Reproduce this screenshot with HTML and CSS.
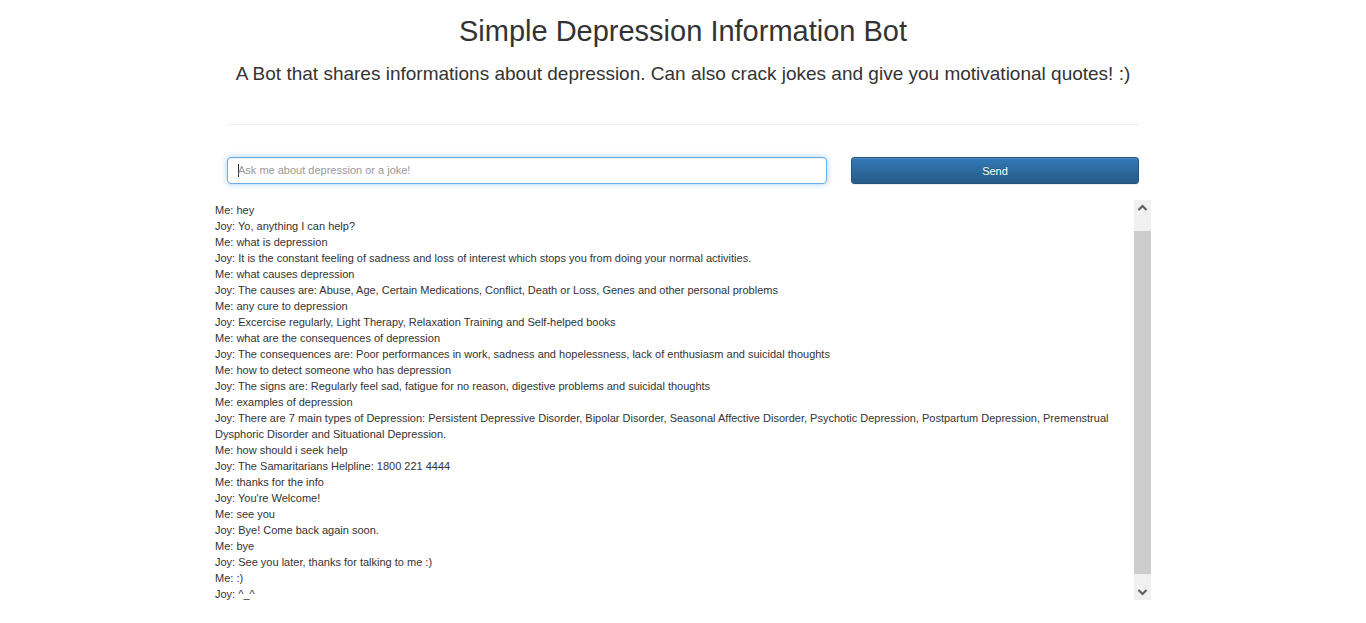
FILE: index.html
```html
<!DOCTYPE html>
<html lang="en">
<head>
<meta charset="utf-8">
<meta name="viewport" content="width=device-width, initial-scale=1">
<title>Simple Depression Information Bot</title>
<link rel="stylesheet" href="styles.css">
</head>
<body>
<main class="container">
  <header class="page-header">
    <h1 class="title">Simple Depression Information Bot</h1>
    <h3 class="subtitle">A Bot that shares informations about depression. Can also crack jokes and give you motivational quotes! :)</h3>
  </header>
  <form class="ask-form">
    <input class="ask-input" type="text" aria-label="Your message" placeholder="Ask me about depression or a joke!">
    <button class="send-button" type="button">Send</button>
  </form>
  <section class="chat">
    <div class="chat-log">
      <p class="message">Me: hey</p>
      <p class="message">Joy: Yo, anything I can help?</p>
      <p class="message">Me: what is depression</p>
      <p class="message">Joy: It is the constant feeling of sadness and loss of interest which stops you from doing your normal activities.</p>
      <p class="message">Me: what causes depression</p>
      <p class="message">Joy: The causes are: Abuse, Age, Certain Medications, Conflict, Death or Loss, Genes and other personal problems</p>
      <p class="message">Me: any cure to depression</p>
      <p class="message">Joy: Excercise regularly, Light Therapy, Relaxation Training and Self-helped books</p>
      <p class="message">Me: what are the consequences of depression</p>
      <p class="message">Joy: The consequences are: Poor performances in work, sadness and hopelessness, lack of enthusiasm and suicidal thoughts</p>
      <p class="message">Me: how to detect someone who has depression</p>
      <p class="message">Joy: The signs are: Regularly feel sad, fatigue for no reason, digestive problems and suicidal thoughts</p>
      <p class="message">Me: examples of depression</p>
      <p class="message">Joy: There are 7 main types of Depression: Persistent Depressive Disorder, Bipolar Disorder, Seasonal Affective Disorder, Psychotic Depression, Postpartum Depression, Premenstrual Dysphoric Disorder and Situational Depression.</p>
      <p class="message">Me: how should i seek help</p>
      <p class="message">Joy: The Samaritarians Helpline: 1800 221 4444</p>
      <p class="message">Me: thanks for the info</p>
      <p class="message">Joy: You're Welcome!</p>
      <p class="message">Me: see you</p>
      <p class="message">Joy: Bye! Come back again soon.</p>
      <p class="message">Me: bye</p>
      <p class="message">Joy: See you later, thanks for talking to me :)</p>
      <p class="message">Me: :)</p>
      <p class="message">Joy: ^_^</p>
    </div>
    <div class="scrollbar">
      <button class="scroll-arrow" type="button" aria-label="Scroll up">
        <svg width="17" height="17" viewBox="0 0 17 17"><path d="M4.5 10 8.5 6 12.5 10" fill="none" stroke="#606060" stroke-width="2.2"/></svg>
      </button>
      <div class="scroll-track"><div class="scroll-thumb"></div></div>
      <button class="scroll-arrow" type="button" aria-label="Scroll down">
        <svg width="17" height="17" viewBox="0 0 17 17"><path d="M4.5 7 8.5 11 12.5 7" fill="none" stroke="#606060" stroke-width="2.2"/></svg>
      </button>
    </div>
  </section>
</main>
</body>
</html>
```

FILE: styles.css
```css
* {
  box-sizing: border-box;
}

body {
  margin: 0;
  background: #fff;
  color: #333;
  font: 11px/16px "Liberation Sans", Arial, sans-serif;
}

.container {
  max-width: 936px;
  margin: 0 auto;
  padding: 15px 0 23px;
}

.page-header {
  margin: 0 12px 32px;
  padding-bottom: 40px;
  border-bottom: 1px solid #eee;
  text-align: center;
}

.title {
  margin: 0 0 16px;
  font-size: 29px;
  font-weight: 400;
  line-height: 32px;
}

.subtitle {
  margin: 0;
  font-size: 19px;
  font-weight: 400;
  line-height: 21px;
}

.ask-form {
  display: grid;
  grid-template-columns: 600fr 288fr;
  gap: 24px;
  padding: 0 12px;
  margin-bottom: 16px;
}

.ask-input,
.send-button {
  width: 100%;
  height: 27px;
  font: inherit;
}

/* The 1px dark bar at the left of the field is the text cursor. */
.ask-input {
  padding: 4px 10px 6px;
  border: 1px solid #66afe9;
  border-radius: 4px;
  background: linear-gradient(#333, #333) 10px center / 1px 13px no-repeat #fff;
  box-shadow: inset 0 1px 1px rgba(0, 0, 0, 0.075), 0 0 6px rgba(102, 175, 233, 0.6);
  outline: 0;
}

.ask-input::placeholder {
  color: #999;
  opacity: 1;
}

.send-button {
  padding: 4px 10px;
  border: 1px solid #245580;
  border-radius: 3px;
  background: linear-gradient(#337ab7, #265a88);
  box-shadow: inset 0 1px 0 rgba(255, 255, 255, 0.15), 0 1px 1px rgba(0, 0, 0, 0.075);
  color: #fff;
  text-shadow: 0 -1px 0 rgba(0, 0, 0, 0.2);
}

.chat {
  display: flex;
  max-height: 400px;
  overflow: hidden;
}

.chat-log {
  flex: 1;
  padding-top: 2px;
}

.message {
  margin: 0;
}

.scrollbar {
  display: flex;
  flex-direction: column;
  width: 17px;
  max-height: 400px;
  background: #f0f0f0;
}

.scroll-arrow {
  display: block;
  width: 17px;
  height: 17px;
  padding: 0;
  border: 0;
  background: transparent;
}

.scroll-arrow svg {
  display: block;
}

.scroll-track {
  display: flex;
  flex: 1;
  flex-direction: column;
  padding: 14px 0 9px;
}

.scroll-thumb {
  flex: 1;
  background: #cdcdcd;
}
```
